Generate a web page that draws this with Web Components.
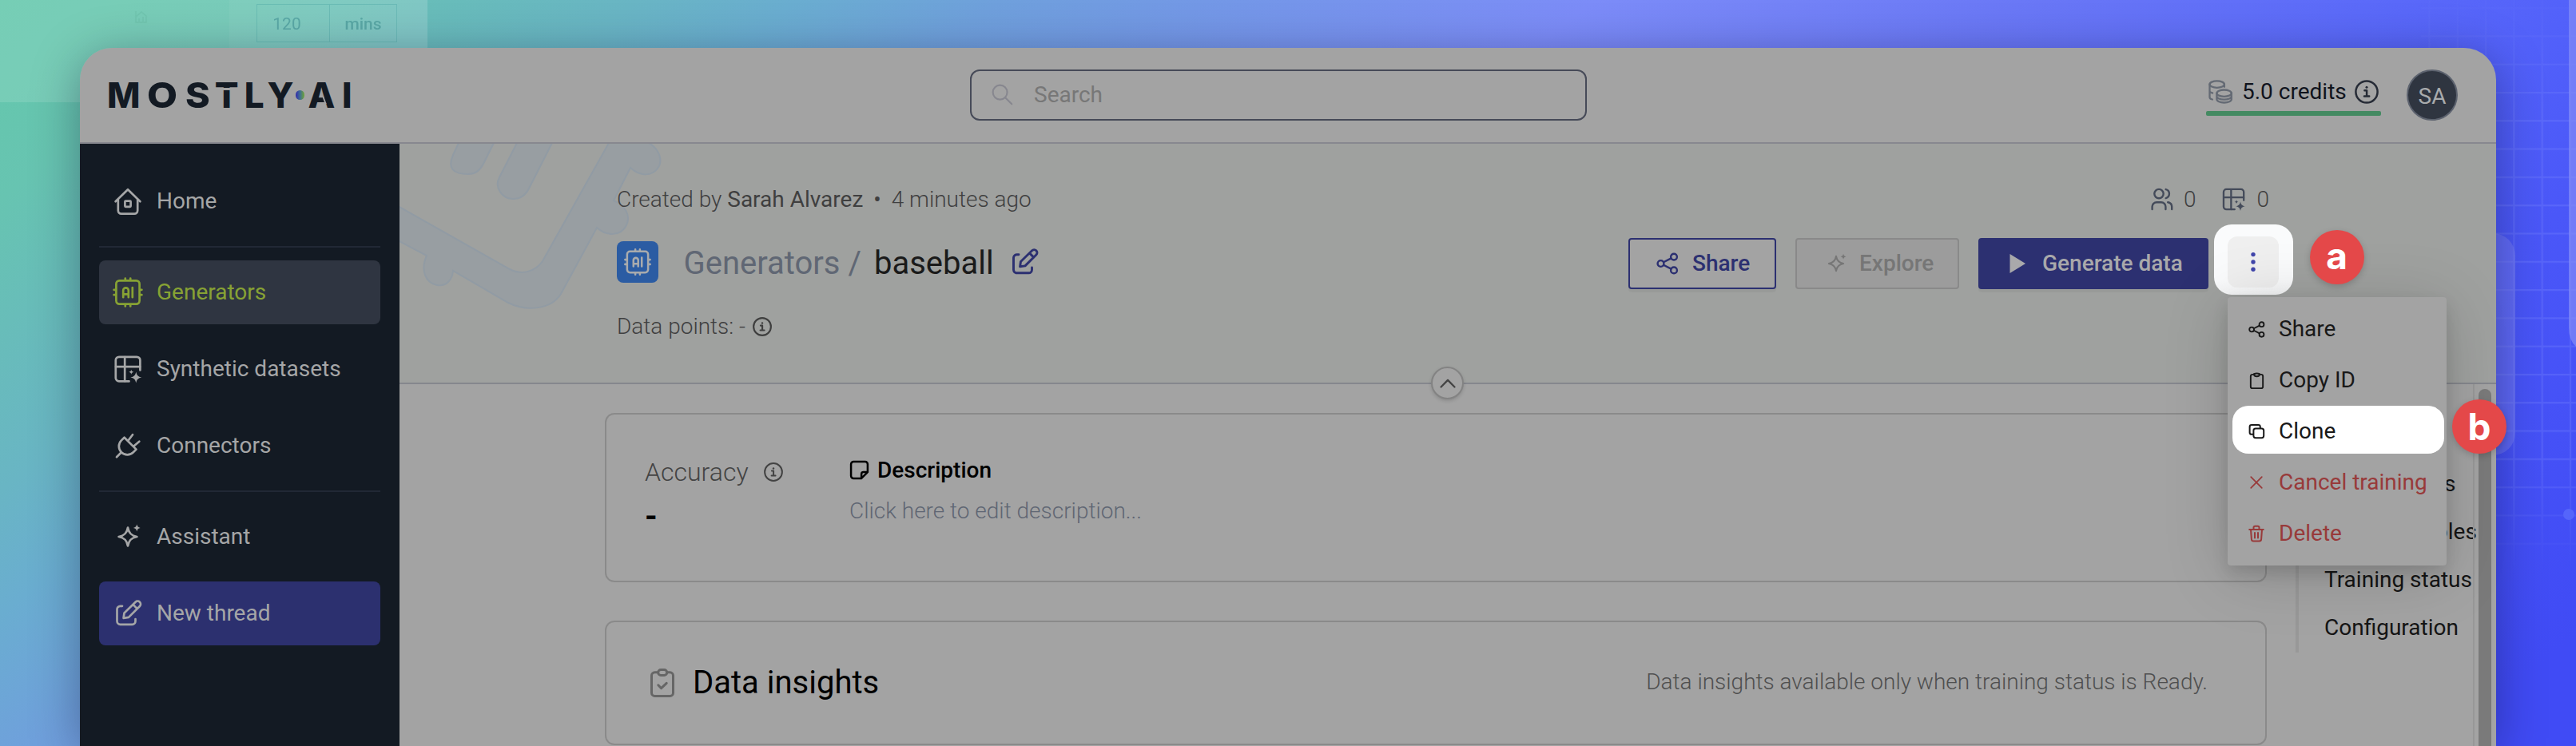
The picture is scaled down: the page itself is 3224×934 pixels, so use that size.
<!DOCTYPE html>
<html lang="en">
<head>
<meta charset="utf-8">
<title>MOSTLY AI – baseball</title>
<style>
html,body{margin:0;padding:0}
body{width:3224px;height:934px;overflow:hidden;font-family:Roboto,"Liberation Sans",sans-serif;font-size:28px;color:#1a1a1a}
</style>
</head>
<body>
<docs-stage></docs-stage>
<script>
const define = (name, html, setup) => customElements.define(name, class extends HTMLElement {
  connectedCallback() {
    if (this.shadowRoot) return;
    const root = this.attachShadow({ mode: 'open' });
    const t = document.createElement('template');
    t.innerHTML = html;
    root.append(t.content.cloneNode(true));
    if (setup) setup.call(this, root);
  }
});

/* Icons: [viewBox size, markup] */
const ICONS = {
  home: [40, '<path d="M4.6 20.2 20 5.2l15.4 15"/><path d="M7.8 18v13.6a4 4 0 0 0 4 4h16.4a4 4 0 0 0 4-4V18"/><rect x="16.4" y="19.7" width="7.2" height="7.2" rx=".8"/>'],
  chip: [40, '<rect x="5.4" y="5.4" width="29.2" height="29.2" rx="4"/><path d="M16.8 2.6v2M23.2 2.6v2M16.8 35.4v2M23.2 35.4v2M2.6 16.8h2M2.6 23.2h2M35.4 16.8h2M35.4 23.2h2"/><path d="M14.2 26.2v-8.6a3.3 3.3 0 0 1 6.6 0v8.6M14.2 22.4h6.6M25.8 14v12.2"/>'],
  table: [40, '<path d="M35.4 21.5V9a4.2 4.2 0 0 0-4.2-4.2H9A4.2 4.2 0 0 0 4.8 9v22.2A4.2 4.2 0 0 0 9 35.400h12.500"/><path d="M16.200 5v30.200M5 17.200h30.200"/><path d="M30.300 23.600c.9 4.500 2.500 6.100 7 7-4.500.9-6.100 2.500-7 7-.9-4.500-2.500-6.100-7-7 4.500-.9 6.100-2.500 7-7z" fill="currentColor" stroke="none"/><path d="M24.300 20.800c.5 2 1 2.500 3 3-2 .5-2.500 1-3 3-.5-2-1-2.500-3-3 2-.5 2.500-1 3-3z" fill="currentColor" stroke="none"/>'],
  plug: [40, '<path d="M15.600 9.700 30.500 24.600l-3.700 3.700a10.500 10.500 0 0 1-14.900-14.900zM11.900 28.300 6 34.200M20.500 13.500 26 6.200M27.500 20.500l6.800-5.800"/>'],
  spark: [40, '<path d="M20 8.600c1.200 7 4.300 10.200 11.400 11.400C24.300 21.200 21.200 24.400 20 31.400 18.800 24.400 15.700 21.200 8.600 20 15.700 18.800 18.800 15.600 20 8.600z"/><path d="M31.300 4.600c.8 2.900 1.600 3.700 4.400 4.400-2.800.7-3.600 1.500-4.400 4.400-.8-2.900-1.600-3.700-4.400-4.400 2.800-.7 3.600-1.500 4.400-4.400z" fill="currentColor" stroke="none"/>'],
  edit: [40, '<path d="M13 10.800h-2.500a4 4 0 0 0-4 4v15a4 4 0 0 0 4 4h15a4 4 0 0 0 4-4V27"/><path d="m14.600 25.800.9-6.300L29.600 5.700a3.700 3.700 0 0 1 5.300 5.300L21 24.900zM26.500 8.900l5.200 5.200"/>'],
  info: [30, '<circle cx="15" cy="15" r="13.600"/><path d="M12.400 13.200h2.700v7.200M12 20.600h6.200"/><circle cx="15" cy="9.300" r="1.500" fill="currentColor" stroke="none"/>'],
  coins: [30, '<ellipse cx="10.700" cy="5.600" rx="9.200" ry="4.200"/><path d="M1.500 5.600v16.200c0 1.200 1.200 2.200 3.400 2.700M1.500 14.500c.6 1 1.700 1.600 3.600 2M19.900 5.600v3.200"/><ellipse cx="19.600" cy="16.700" rx="9.200" ry="4.200"/><path d="M10.400 16.700v7.600c0 2.300 4 4.200 9.200 4.200s9.200-1.900 9.200-4.200v-7.600M10.400 20.600c0 2.300 4 4 9.200 4s9.200-1.700 9.200-4"/>'],
  users: [28, '<circle cx="10" cy="7.600" r="5.700"/><path d="M1.600 27v-3.200a5.600 5.600 0 0 1 5.600-5.600h5.600a5.600 5.600 0 0 1 5.600 5.600V27M18.700 2.100a5.700 5.700 0 0 1 0 11M21.200 18.200c3 .6 5 2.900 5 5.600V27"/>'],
  share: [28, '<circle cx="5.500" cy="14" r="3.900"/><circle cx="22" cy="5.600" r="3.900"/><circle cx="22" cy="22.400" r="3.900"/><path d="m9 12.300 9.500-4.900M9 15.700l9.500 4.900"/>'],
  search: [28, '<circle cx="11" cy="11" r="9.300"/><path d="m17.800 17.800 8.400 8.400"/>'],
  play: [28, '<path d="M4.500 2v24L24 14z" fill="currentColor" stroke="none"/>'],
  clip: [24, '<path d="M8 4H6.300A2.300 2.300 0 0 0 4 6.300v13.400A2.300 2.300 0 0 0 6.300 22h11.400a2.300 2.300 0 0 0 2.300-2.300V6.300A2.300 2.300 0 0 0 17.700 4H16"/><path d="M8.300 3.400c0 1.600.8 3.200 3.700 3.200s3.700-1.600 3.700-3.200c-2.600-1-4.800-1-7.400 0z"/>'],
  clone: [24, '<rect x="8.400" y="8.400" width="12.800" height="11.800" rx="2.600"/><path d="M8 15.800H6a2.400 2.400 0 0 1-2.400-2.400V6.400A2.400 2.400 0 0 1 6 4h8.400a2.400 2.400 0 0 1 2.400 2.400V8"/>'],
  close: [24, '<path d="m5.200 5.200 13.600 13.600M18.800 5.200 5.200 18.800"/>'],
  trash: [24, '<path d="M3.200 7h17.600M5 7l.9 12.200A2.500 2.500 0 0 0 8.400 21.500h7.200a2.500 2.500 0 0 0 2.500-2.300L19 7M8.500 7V4.500a1.700 1.700 0 0 1 1.700-1.700h3.600a1.700 1.700 0 0 1 1.700 1.700V7M10 11v6.500M14 11v6.500"/>'],
  note: [24, '<path d="M14.500 22H5a3 3 0 0 1-3-3V5a3 3 0 0 1 3-3h14a3 3 0 0 1 3 3v9.500L14.500 22v-5a2.500 2.500 0 0 1 2.500-2.500h5"/>'],
  check: [40, '<path d="M14.500 6.800H10.500A4 4 0 0 0 6.500 10.800v21.600a4 4 0 0 0 4 4H29.500a4 4 0 0 0 4-4V10.800a4 4 0 0 0-4-4H26"/><rect x="14.700" y="3.600" width="11" height="6.800" rx="3.400"/><path d="m14.800 22.800 3.800 3.900 6.600-6.400"/>'],
  up: [24, '<path d="m3.500 16.500 8.500-8.600 8.500 8.600"/>']
};
define('ui-icon', '<style>:host{display:block;flex:none}svg{display:block;overflow:visible}</style>', function (root) {
  const [box, body] = ICONS[this.getAttribute('name')];
  const size = this.getAttribute('size') || box;
  root.innerHTML += `<svg width="${size}" height="${size}" viewBox="0 0 ${box} ${box}" fill="none" stroke="currentColor" stroke-width="${this.getAttribute('stroke') || 2.6}" stroke-linecap="round" stroke-linejoin="round" aria-hidden="true">${body}</svg>`;
});
const makeIcon = (name, size, stroke) => {
  const icon = document.createElement('ui-icon');
  icon.setAttribute('name', name);
  icon.setAttribute('size', size);
  icon.setAttribute('stroke', stroke);
  return icon;
};

define('brand-logo', `<style>
:host{display:flex;align-items:center;height:44px;color:#131a23;font:800 44px/44px Inter,"Liberation Sans",sans-serif;white-space:nowrap}
.word,.ai{position:relative;display:block;font-kerning:none}
.word{width:235.700px}
i{font-style:normal;display:inline-block}
i b{display:inline-block;font-weight:inherit;transform-origin:0 50%}
.dot{width:11.500px;height:11.500px;border-radius:50%;background:linear-gradient(90deg,#3537a8 10%,#3f6f93 50%,#6ea633);margin:0 4.300px 0 0}
.cut{position:absolute;background:#a3a3a3}
</style><span class="word"><i style="width:50px">M</i><i style="width:48.400px"><b style="transform:scaleX(1.12)">O</b></i><i style="width:36.300px"><b style="transform:scaleX(1.06)">S</b></i><i style="width:37px">T</i><i style="width:28.700px">L</i><i>Y</i><span class="cut" style="left:134px;top:12.700px;width:32px;height:3.400px"></span></span><span class="dot"></span><span class="ai"><i style="width:42.400px">A</i><i>I</i><span class="cut" style="left:20px;top:24px;width:2.400px;height:9px;transform:skewX(20deg)"></span></span>`);

define('search-field', `<style>
:host{box-sizing:border-box;display:flex;align-items:center;gap:26px;width:772px;height:64px;padding:0 25px 1px;border:2px solid #464a58;border-radius:12px;color:#777}
ui-icon{color:#87878f}
</style><ui-icon name="search" size="27" stroke="2.200"></ui-icon><slot></slot>`);

define('credit-meter', `<style>
:host{box-sizing:border-box;position:relative;display:flex;align-items:center;gap:12px;width:219px;height:57px;padding:8px 3px 11px;color:#10131c;white-space:nowrap}
span{flex:1;min-width:0;margin-top:-2px}
.coins{color:#646a74}
.info{color:#262b36}
hr{position:absolute;left:0;right:0;bottom:0;height:6px;margin:0;border:0;border-radius:2px;background:#448a62}
</style><ui-icon class="coins" name="coins" size="30" stroke="2.300"></ui-icon><span><slot></slot></span><ui-icon class="info" name="info" size="30" stroke="2.500"></ui-icon><hr>`);

define('user-avatar', `<style>
:host{box-sizing:border-box;display:flex;align-items:center;justify-content:center;width:64px;height:64px;padding-top:2px;border:2px solid #5c626e;border-radius:50%;background:#2f3540;color:#a9abad}
</style><slot></slot>`);

define('app-header', `<style>
:host{box-sizing:border-box;display:grid;grid-template-columns:1114px 772px 1fr;align-items:center;height:120px;padding:0 48px 2px 0;background:linear-gradient(#87888f,#87888f) bottom/100% 2px no-repeat,#a3a3a3}
brand-logo{margin-left:34px}
.right{display:flex;justify-content:flex-end;align-items:center;gap:32px}
credit-meter{margin-bottom:5px}
</style><brand-logo></brand-logo><search-field>Search</search-field><div class="right"><credit-meter>5.0 credits</credit-meter><user-avatar>SA</user-avatar></div>`);

define('nav-item', `<style>
:host{box-sizing:border-box;display:flex;align-items:center;gap:16px;height:80px;padding:0 16px;border-radius:8px;color:#a5a6a7}
:host([active]){background:#2f3541;color:#87a234}
:host([primary]){background:#2c306f}
span{margin-top:-2px}
</style><span><slot></slot></span>`, function (root) {
  root.querySelector('span').before(makeIcon(this.getAttribute('icon'), 40, 2.7));
});

define('side-nav', `<style>
:host{box-sizing:border-box;display:flex;flex-direction:column;gap:16px;padding:32px 24px;background:#131a23}
hr{width:100%;height:2px;margin:0;border:0;background:#212835}
</style><nav-item icon="home">Home</nav-item><hr><nav-item icon="chip" active>Generators</nav-item><nav-item icon="table">Synthetic datasets</nav-item><nav-item icon="plug">Connectors</nav-item><hr><nav-item icon="spark">Assistant</nav-item><nav-item icon="edit" primary>New thread</nav-item>`);

define('action-button', `<style>
:host{box-sizing:border-box;display:flex;align-items:center;gap:18px;height:64px;padding-left:33px;border:2px solid #2c3071;border-radius:4px;background:#a3a3a3;color:#2c3071;font-weight:500;box-shadow:0 4px 1px rgba(0,0,0,.04);white-space:nowrap}
:host([kind=disabled]){border-color:#898989;background:#9c9c9c;color:#767676;box-shadow:none}
:host([kind=primary]){background:#2c3071;color:#a9a9ab}
span{margin:-2px 0 0 -1px}
</style><slot name="icon"></slot><span><slot></slot></span>`);

define('more-button', `<style>
:host{position:relative;z-index:2;display:flex;align-items:center;justify-content:center;width:64px;height:64px;margin-top:-2px}
:host::before{content:"";position:absolute;z-index:-1;inset:-15px -18px -9px -17px;border-radius:22px;background:linear-gradient(#fafbfc 80%,#f3f4f5)}
:host::after{content:"";position:absolute;z-index:-1;inset:0;border-radius:12px;background:#efefef}
svg{display:block}
</style><svg width="8" height="26" viewBox="0 0 8 26" fill="#4146ab"><circle cx="4" cy="3.600" r="2.700"/><circle cx="4" cy="13" r="2.700"/><circle cx="4" cy="22.300" r="2.700"/></svg>`);

define('generator-header', `<style>
:host{box-sizing:border-box;position:relative;display:flex;flex-direction:column;height:301px;padding:0 272px;background:linear-gradient(#85878d,#85878d) bottom/100% 2px no-repeat,#9fa19f}
.deco{position:absolute;left:0;top:0}
.row{position:relative;display:flex;align-items:center;justify-content:space-between;white-space:nowrap}
.meta{height:40px;margin-top:49px;font-weight:300;color:#3f3f3f}
.meta b{font-weight:400}
.meta .bul{margin:0 13px 0 13px;font-weight:400}
.stats{display:flex;align-items:center;color:#444b5a;margin-right:12px}
.stats span{color:#3f3f3f}
.main{height:64px;margin-top:29px}
.title{display:flex;align-items:center;font-size:40px;color:#606774}
.title span:not(.tile),.title b{margin-top:-2px}
.tile{display:flex;align-items:center;justify-content:center;width:52px;height:52px;margin:-4px 31.500px 0 0;border-radius:8px;background:#2b5ca3;color:#a9abad}
.title b{font-weight:400;color:#1a1a1a;margin-right:18px;margin-left:16px}
.title .edit{color:#2c3071;margin-top:-4px}
.actions{display:flex;gap:24px}
.points{justify-content:flex-start;gap:9px;height:40px;margin-top:26px;font-weight:300;color:#3f3f3f}
.points ui-icon{margin-top:1px}
.fold{position:absolute;left:1291px;top:279px;box-sizing:border-box;width:41px;height:41px;display:flex;align-items:center;justify-content:center;border:2px solid #838383;border-radius:50%;background:#a3a3a3;color:#444;box-shadow:0 2px 4px rgba(0,0,0,.15)}
</style>
<svg class="deco" width="340" height="210" viewBox="0 0 340 210" fill="#989ea2" stroke="#919ba4" stroke-width="2" aria-hidden="true">
<path d="M74-1 67 14C60 30 66 38 86 38c8 0 15-5 19-13L118-1z"/>
<path d="M147-1 125 42c-7 13 4 27 17 27 9 0 16-5 20-13L191-1z"/>
<path d="M-2 78 138 157c15 8 32 3 41-10L262-1h50c14 8 18 23 11 32-7 9-21 11-34-1l-21 41c14 6 22 18 16 31-7 14-25 14-37 3l-45 83c-12 19-42 23-66 11L67 159c-1 12-9 20-20 18-15-3-21-19-13-37L-2 121z"/>
</svg>
<div class="row meta"><span>Created by <b>Sarah Alvarez</b><span class="bul">•</span>4 minutes ago</span>
<span class="stats"><ui-icon name="users" size="28" stroke="2.400" style="margin-right:13px"></ui-icon><span>0</span><ui-icon name="table" size="33" stroke="2.800" style="margin:0 12px 0 31px"></ui-icon><span>0</span></span></div>
<div class="row main"><div class="title"><span class="tile"><ui-icon name="chip" size="36" stroke="2.800"></ui-icon></span><span>Generators /</span><b>baseball</b><ui-icon class="edit" name="edit" size="40" stroke="2.900"></ui-icon></div>
<div class="actions"><action-button style="width:185px"><ui-icon slot="icon" name="share" size="28" stroke="2.400"></ui-icon>Share</action-button><action-button kind="disabled" style="width:205px"><ui-icon slot="icon" name="spark" size="32" stroke="2.600" style="margin-right:-4px"></ui-icon>Explore</action-button><action-button kind="primary" style="width:288px"><ui-icon slot="icon" name="play" size="28"></ui-icon>Generate data</action-button><more-button></more-button></div></div>
<div class="row points"><span>Data points: -</span><ui-icon name="info" size="24" stroke="2.700"></ui-icon></div>
<div class="fold"><ui-icon name="up" size="24" stroke="2.300"></ui-icon></div>`);

define('content-card', `<style>
:host{box-sizing:border-box;display:flex;width:2080px;border:2px solid #8a8a8a;border-radius:12px}
</style><slot></slot>`);

define('page-toc', `<style>
:host{box-sizing:border-box;display:flex;flex-direction:column;justify-content:flex-end;width:222px;height:300px;border-left:4px solid #989898;padding-left:32px;color:#151515;white-space:nowrap}
div{height:60px;line-height:58px}
.s{padding-left:150px}
.les{padding-left:139px}
</style><div class="s">s</div><div class="les">bles</div><div>Training status</div><div>Configuration</div>`);

define('page-body', `<style>
:host{flex:1;display:flex;min-height:0;background:#a3a3a3}
.cards{display:flex;flex-direction:column;gap:48px;padding:36px 0 0 257px}
.summary{height:212px;padding:52px 48px 0}
.acc{display:flex;flex-direction:column;width:256px;color:#434343}
.acc div{display:flex;align-items:center;gap:19px;height:38px;margin-top:1px;font-size:32px;font-weight:300}
.acc b{color:#000;font-size:40px;font-weight:700;line-height:40px;margin-top:17px}
.desc div{display:flex;align-items:center;gap:10px;height:34px;color:#000;font-weight:500}
.desc p{margin:18px 0 0;line-height:34px;font-weight:300;color:#5f6673}
.insights{height:156px;align-items:center;padding:0 72px 0 50px}
.insights h2{margin:-2px auto 0 18px;color:#000;font-size:40px;font-weight:400}
.insights ui-icon{color:#666}
.insights span{margin-top:-3px;font-weight:300;color:#4f4f4f}
page-toc{margin:36px -80px 0 36px}
.rail{box-sizing:border-box;display:flex;width:29px;margin-left:auto;border-left:2px solid #979797;padding:6px 6px 0 5px}
.rail i{flex:1;border-radius:8px 8px 0 0;background:#7a7a7a}
</style>
<div class="cards">
<content-card class="summary"><div class="acc"><div>Accuracy<ui-icon name="info" size="24" stroke="2.500"></ui-icon></div><b>-</b></div><div class="desc"><div><ui-icon name="note" size="25" stroke="2.400"></ui-icon>Description</div><p>Click here to edit description...</p></div></content-card>
<content-card class="insights"><ui-icon name="check" size="40" stroke="3"></ui-icon><h2>Data insights</h2><span>Data insights available only when training status is Ready.</span></content-card>
</div><page-toc></page-toc><div class="rail"><i></i></div>`);

define('menu-item', `<style>
:host{position:relative;z-index:0;box-sizing:border-box;display:flex;align-items:center;gap:16px;height:64px;padding-left:24px;color:#191919}
:host([danger]){color:#983a3a}
:host([highlight])::before{content:"";position:absolute;z-index:-1;inset:0 3px 4px 5.500px;border-radius:20px;background:#fff}
span{margin-top:-2px}
</style><span><slot></slot></span>`, function (root) {
  const size = +(this.getAttribute('size') || 24);
  const icon = makeIcon(this.getAttribute('icon'), size, this.getAttribute('stroke') || 2);
  icon.style.margin = `0 ${(24 - size) / 2}px`;
  root.querySelector('span').before(icon);
});

define('context-menu', `<style>
:host{box-sizing:border-box;display:flex;flex-direction:column;width:274px;height:336px;padding:8px 0;border-radius:4px;background:#a3a3a3;box-shadow:0 10px 20px rgba(0,0,0,.12),0 10px 80px rgba(0,0,0,.17)}
</style><menu-item icon="share" size="21" stroke="2.500">Share</menu-item><menu-item icon="clip" size="23">Copy ID</menu-item><menu-item icon="clone" highlight>Clone</menu-item><menu-item icon="close" danger stroke="1.700">Cancel training</menu-item><menu-item icon="trash" danger>Delete</menu-item>`);

define('step-badge', `<style>
:host{box-sizing:border-box;display:flex;align-items:center;justify-content:center;width:68px;height:68px;border-radius:50%;background:#e44849;color:#fff;font:700 46px/56px Inter,"Liberation Sans",sans-serif;box-shadow:0 3px 8px rgba(0,0,0,.18)}
</style><slot></slot>`);

define('app-window', `<style>
:host{position:relative;display:flex;flex-direction:column;width:3024px;height:874px;border-radius:40px 40px 0 0;box-shadow:0 10px 60px rgba(0,0,30,.34)}
app-header{border-radius:40px 40px 0 0}
.body{flex:1;display:grid;grid-template-columns:400px 1fr;min-height:0}
main{display:flex;flex-direction:column;min-width:0}
generator-header{z-index:1;flex:none}
context-menu{position:absolute;z-index:1;left:2688px;top:312px}
step-badge{position:absolute;z-index:3}
.a{left:2790.500px;top:228px;padding-bottom:5px}
.b{left:2969px;top:440px}
</style><app-header></app-header><div class="body"><side-nav></side-nav><main><generator-header></generator-header><page-body></page-body></main></div><context-menu></context-menu><step-badge class="a">a</step-badge><step-badge class="b">b</step-badge>`);

define('backdrop-art', `<style>
:host{position:absolute;inset:0;z-index:-1;overflow:hidden}
.sheet{box-sizing:border-box;width:535px;height:128px;padding:5px 38px 0 0;display:flex;justify-content:flex-end;background:linear-gradient(90deg,rgba(255,255,255,.12) 287px,rgba(255,255,255,.16) 287px);color:#5aa8a6;font-size:21px;filter:blur(.6px)}
.field{display:flex;height:46px;border:1px solid rgba(70,160,160,.35)}
.field span{box-sizing:border-box;display:flex;align-items:center;justify-content:center;width:90px;padding:2px 16px 0 0}
.field span+span{width:84px;padding-right:0;border-left:1px solid rgba(70,160,160,.35);font-weight:500}
svg{position:absolute;left:0;top:0}
</style>
<div class="sheet"><div class="field"><span>120</span><span>mins</span></div></div>
<svg width="3224" height="934" viewBox="0 0 3224 934" aria-hidden="true">
<defs><linearGradient id="fade" x2="0" y2="1"><stop offset="0" stop-color="#fff" stop-opacity=".2"/><stop offset=".2" stop-color="#fff"/><stop offset=".8" stop-color="#fff"/><stop offset="1" stop-color="#fff" stop-opacity="0"/></linearGradient>
<pattern id="grid" x="3110" y="9" width="35.300" height="35.300" patternUnits="userSpaceOnUse"><path d="M0 1h36M1 0v36" stroke="#7c87ff" stroke-opacity=".3" stroke-width="2.400"/></pattern>
<mask id="m"><rect x="2900" y="0" width="324" height="720" fill="url(#fade)"/></mask></defs>
<rect x="3030" y="0" width="194" height="720" fill="url(#grid)" mask="url(#m)"/>
<path d="M3100 292h20a28 28 0 0 1 28 28v222a28 28 0 0 1-28 28h-20z" fill="#7f86f2" fill-opacity=".42"/>
<path d="M3215 0h20v440q-20-6-20-30z" fill="#8791f8" fill-opacity=".65"/>
<circle cx="3215" cy="644" r="7" fill="#5565fb"/>
<path d="M170 14v14h13V20l-6-5-7 6M174 27v-4M179 27v-6" fill="none" stroke="#6bbfaa" stroke-opacity=".6" stroke-width="1.500"/>
</svg>`);

define('docs-stage', `<style>
:host{position:relative;z-index:0;box-sizing:border-box;display:block;width:3224px;height:934px;padding:60px 100px 0;overflow:hidden;background:linear-gradient(142.400deg,#64c8ab 0,#67c4b1 7.300%,#68bdb9 12%,#69b5c4 18%,#6aadd0 22.500%,#6fa0dc 28.200%,#7398e6 34%,#7c8cf8 45%,#6a78f6 57%,#5b6af9 67%,#5261fa 73%,#4a57f8 80%,#404bf5 96%)}
</style><backdrop-art></backdrop-art><app-window></app-window>`);
</script>
</body>
</html>
